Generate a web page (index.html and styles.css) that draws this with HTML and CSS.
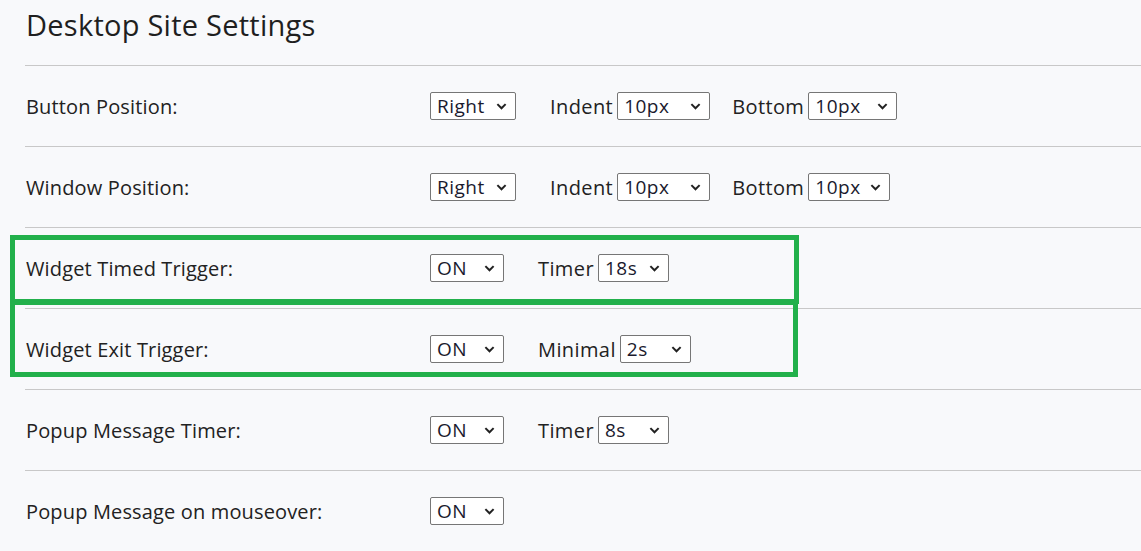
FILE: index.html
```html
<!DOCTYPE html>
<html lang="en">
<head>
<meta charset="utf-8">
<title>Desktop Site Settings</title>
<link rel="stylesheet" href="styles.css">
</head>
<body>
<div class="page">
  <header class="head">
    <h1 class="title">Desktop Site Settings</h1>
  </header>

  <div class="row">
    <div class="label">Button Position:</div>
    <div class="controls">
      <select class="sel w-86"><option>Right</option></select>
      <label class="group"><span class="glabel">Indent</span><select class="sel w-93"><option>10px</option></select></label>
      <label class="group group-near"><span class="glabel">Bottom</span><select class="sel w-89"><option>10px</option></select></label>
    </div>
  </div>

  <div class="row">
    <div class="label">Window Position:</div>
    <div class="controls">
      <select class="sel w-86"><option>Right</option></select>
      <label class="group"><span class="glabel">Indent</span><select class="sel w-93"><option>10px</option></select></label>
      <label class="group group-near"><span class="glabel">Bottom</span><select class="sel w-82"><option>10px</option></select></label>
    </div>
  </div>

  <div class="row">
    <div class="label">Widget Timed Trigger:</div>
    <div class="controls">
      <select class="sel w-74"><option>ON</option></select>
      <label class="group"><span class="glabel">Timer</span><select class="sel w-71"><option>18s</option></select></label>
    </div>
  </div>

  <div class="row">
    <div class="label">Widget Exit Trigger:</div>
    <div class="controls">
      <select class="sel w-74"><option>ON</option></select>
      <label class="group"><span class="glabel">Minimal</span><select class="sel w-71"><option>2s</option></select></label>
    </div>
  </div>

  <div class="row">
    <div class="label">Popup Message Timer:</div>
    <div class="controls">
      <select class="sel w-74"><option>ON</option></select>
      <label class="group"><span class="glabel">Timer</span><select class="sel w-71"><option>8s</option></select></label>
    </div>
  </div>

  <div class="row">
    <div class="label">Popup Message on mouseover:</div>
    <div class="controls">
      <select class="sel w-74"><option>ON</option></select>
    </div>
  </div>

  <div class="highlight hl-timed"></div>
  <div class="highlight hl-exit"></div>
</div>
</body>
</html>
```

FILE: styles.css
```css
* { box-sizing: border-box; }

html, body {
  margin: 0;
  padding: 0;
  background: #f8f9fb;
}

body {
  font-family: "Open Sans", "Liberation Sans", sans-serif;
  color: #222222;
  overflow: hidden;
}

.page {
  position: relative;
  padding-left: 25px;
  height: 551px;
}

.head {
  height: 65px;
  padding-top: 5px;
}

.title {
  margin: 0;
  font-size: 29px;
  line-height: 40px;
  font-weight: 400;
  letter-spacing: 0.25px;
  color: #1f1f1f;
  padding-left: 1px;
}

.row {
  display: flex;
  align-items: center;
  height: 81px;
  border-top: 1px solid #c8c8c8;
}

.label {
  width: 405px;
  flex: none;
  font-size: 20px;
  letter-spacing: 0.15px;
  color: #222222;
  padding-left: 1px;
}

.controls {
  display: flex;
  align-items: center;
}

.group {
  display: flex;
  align-items: center;
  gap: 4px;
  margin-left: 34px;
}

.group-near {
  margin-left: 22px;
}

.glabel {
  font-size: 20px;
  letter-spacing: 0.4px;
  color: #222222;
}

.sel {
  appearance: none;
  -webkit-appearance: none;
  height: 28px;
  margin: 0;
  padding: 0 22px 0 6px;
  border: 1px solid #767676;
  border-radius: 2px;
  background-color: #ffffff;
  background-image: url("data:image/svg+xml,%3Csvg xmlns='http://www.w3.org/2000/svg' width='12' height='8' viewBox='0 0 12 8'%3E%3Cpath d='M1.3 1.3 L6 6 L10.7 1.3' fill='none' stroke='%23222' stroke-width='2.3'/%3E%3C/svg%3E");
  background-repeat: no-repeat;
  background-position: right 8px center;
  background-size: 11px 7px;
  font-family: "Open Sans", "Liberation Sans", sans-serif;
  font-size: 19px;
  letter-spacing: 0.5px;
  color: #1a1a2e;
  line-height: 26px;
}

.w-86 { width: 86px; }
.w-93 { width: 93px; }
.w-89 { width: 89px; }
.w-82 { width: 82px; }
.w-74 { width: 74px; }
.w-71 { width: 71px; }

.highlight {
  position: absolute;
  border: 5px solid #22b04b;
  pointer-events: none;
}

.hl-timed {
  left: 10px;
  top: 235px;
  width: 789px;
  height: 69px;
}

.hl-exit {
  left: 10px;
  top: 300px;
  width: 788px;
  height: 77px;
}
```
